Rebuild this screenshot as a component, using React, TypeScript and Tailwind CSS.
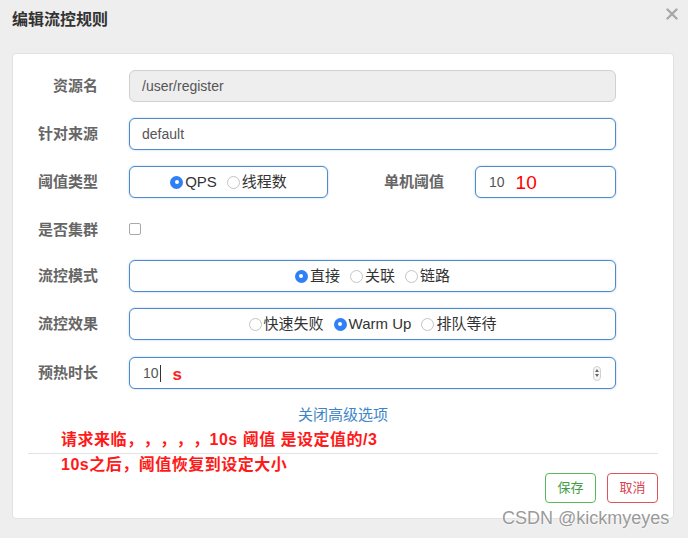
const font = { fontFamily: '"Liberation Sans", "Noto Sans CJK SC", sans-serif' };

function Radio({ label, checked }: { label: string; checked?: boolean }) {
  return (
    <span className="flex items-center mr-[10px] last:mr-0">
      {checked ? (
        <span className="w-[13px] h-[13px] rounded-full bg-[#2f7ff7] flex items-center justify-center mr-[2px]">
          <span className="w-[4px] h-[4px] rounded-full bg-white" />
        </span>
      ) : (
        <span className="w-[13px] h-[13px] rounded-full border border-[#c4c4c4] bg-white mr-[2px]" />
      )}
      <span className="text-[15px] text-[#333]">{label}</span>
    </span>
  );
}

function Label({ children, w = 'w-[85px]' }: { children: string; w?: string }) {
  return (
    <div className={`${w} shrink-0 text-right text-[15px] font-bold text-[#666] mr-[31px]`}>{children}</div>
  );
}

const boxCls = 'h-[32px] rounded-[6px] border border-[#4d8bcb] shadow-[0_0_2px_rgba(77,139,203,0.5)] bg-white';

export default function App() {
  return (
    <div className="relative w-[688px] h-[538px] bg-[#eeeeee] overflow-hidden [text-spacing-trim:space-all]" style={font}>
      {/* header */}
      <div className="h-[53px] flex items-start pl-[12px] pt-[9px]">
        <h1 className="text-[16px] font-bold text-[#333] leading-[22px]">编辑流控规则</h1>
      </div>
      <svg className="absolute left-[666px] top-[8px]" width="12" height="12" viewBox="0 0 12 12">
        <path d="M1.5 1.5 L10.5 10.5 M10.5 1.5 L1.5 10.5" stroke="#a8a8a8" strokeWidth="2.4" strokeLinecap="round" />
      </svg>

      {/* panel */}
      <div className="ml-[12px] w-[662px] h-[466px] bg-white rounded-[4px] border border-[#e2e2e2] pt-[16px] flex flex-col">
        <div className="flex items-center pr-[57px]">
          <Label>资源名</Label>
          <div className="flex-1 h-[32px] rounded-[6px] border border-[#d0d0d0] bg-[#eeeeee] flex items-center px-[12px] text-[14px] text-[#555]">
            /user/register
          </div>
        </div>

        <div className="flex items-center pr-[57px] mt-[16px]">
          <Label>针对来源</Label>
          <div className={`flex-1 ${boxCls} flex items-center px-[12px] text-[14px] text-[#555]`}>default</div>
        </div>

        <div className="flex items-center pr-[57px] mt-[16px]">
          <Label>阈值类型</Label>
          <div className={`w-[199px] ${boxCls} flex items-center justify-center`}>
            <Radio label="QPS" checked />
            <Radio label="线程数" />
          </div>
          <Label w="w-[116px]">单机阈值</Label>
          <div className={`flex-1 ${boxCls} flex items-center pl-[13px]`}>
            <span className="text-[14px] text-[#555]">10</span>
            <span className="ml-[11px] text-[19px] text-[#ff0000] leading-none">10</span>
          </div>
        </div>

        <div className="flex items-center pr-[57px] mt-[16px] h-[32px]">
          <Label>是否集群</Label>
          <span className="w-[12px] h-[12px] rounded-[2px] border border-[#a9a9a9] bg-white mt-[-2px]" />
        </div>

        <div className="flex items-center pr-[57px] mt-[14px]">
          <Label>流控模式</Label>
          <div className={`flex-1 ${boxCls} flex items-center justify-center`}>
            <Radio label="直接" checked />
            <Radio label="关联" />
            <Radio label="链路" />
          </div>
        </div>

        <div className="flex items-center pr-[57px] mt-[16px]">
          <Label>流控效果</Label>
          <div className={`flex-1 ${boxCls} flex items-center justify-center`}>
            <Radio label="快速失败" />
            <Radio label="Warm Up" checked />
            <Radio label="排队等待" />
          </div>
        </div>

        <div className="flex items-center pr-[57px] mt-[17px]">
          <Label>预热时长</Label>
          <div className={`flex-1 ${boxCls} flex items-center pl-[13px] pr-[14px]`}>
            <span className="text-[14px] text-[#555]">10</span>
            <span className="w-px h-[17px] bg-[#333] ml-[1px]" />
            <span className="ml-[12px] text-[17px] font-bold text-[#ff2020] leading-none mb-[-2px]">s</span>
            <span className="ml-auto w-[8px] h-[15px] rounded-full border border-[#d0d0d0] bg-[#f7f7f7] flex flex-col items-center justify-center gap-[2px]">
              <svg width="4" height="3" viewBox="0 0 4 3"><path d="M0 3 L2 0 L4 3 Z" fill="#666" /></svg>
              <svg width="4" height="3" viewBox="0 0 4 3"><path d="M0 0 L2 3 L4 0 Z" fill="#666" /></svg>
            </span>
          </div>
        </div>

        <div className="mt-[16px] text-center text-[15px] leading-[20px] text-[#3d85c6]">关闭高级选项</div>

        <div className="mt-[4px] pl-[48px] text-[16px] tracking-[0.5px] font-bold leading-[22px] text-[#ff1a1a]">
          请求来临，，，，，10s 阈值 是设定值的/3
        </div>
        <div className="mx-[15px] mt-[2px] border-t border-[#e3e3e3]" />
        <div className="flex items-start pr-[15px]">
          <div className="pl-[48px] text-[16px] tracking-[0.5px] font-bold leading-[22px] text-[#ff1a1a]">10s之后，阈值恢复到设定大小</div>
          <div className="ml-auto mt-[19px] flex gap-[11px]">
            <button className="w-[51px] h-[30px] rounded-[4px] border border-[#5cb85c] text-[13px] text-[#449d44] bg-white">保存</button>
            <button className="w-[51px] h-[30px] rounded-[4px] border border-[#e0525c] text-[13px] text-[#d9434f] bg-white">取消</button>
          </div>
        </div>
      </div>

      {/* watermark */}
      <div
        className="absolute left-[502px] top-[506px] text-[18px] leading-[24px] text-[#9a9a9a]"
        style={{ textShadow: '0 0 2px #fff, 0 0 2px #fff' }}
      >
        CSDN @kickmyeyes
      </div>
    </div>
  );
}
